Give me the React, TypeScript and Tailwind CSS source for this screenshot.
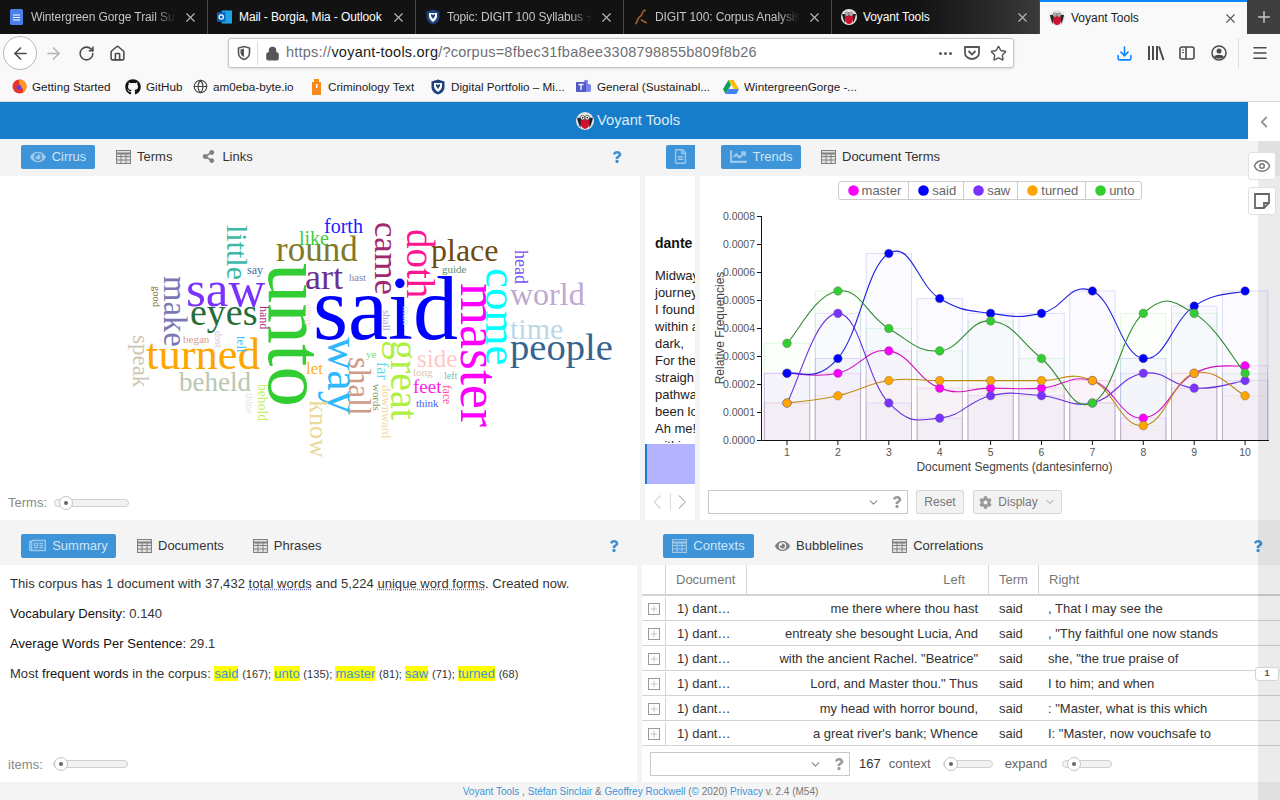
import type { ReactNode } from "react";
import { FaEye, FaShareAlt, FaQuestion, FaCog, FaChartLine, FaRegFileAlt, FaRegNewspaper, FaGithub } from "react-icons/fa";
import { ArrowLeft, ArrowRight, RotateCw, Home, Lock, Globe, Download, ChevronDown, ChevronLeft, ChevronRight, X, Plus, Menu, Star, Eye } from "lucide-react";

// [text, x, y, size, colour, rotated] - x/y is where the baseline starts
const WORDS: [string, number, number, number, string, boolean][] = [
  ["said", 313, 338, 90, "#0000ff", false],
  ["saw", 186, 305, 51, "#7a33ff", false],
  ["eyes", 190, 324, 38, "#256d37", false],
  ["turned", 146, 368, 44.6, "#ffa500", false],
  ["beheld", 179, 390, 27, "#b9c7b2", false],
  ["round", 276, 261, 35, "#7f7a2a", false],
  ["art", 305, 288, 36, "#6a2f90", false],
  ["like", 299, 244, 20, "#3ccf3c", false],
  ["forth", 324, 232, 20, "#1a1aff", false],
  ["say", 247, 273, 12, "#3b6aa0", false],
  ["hast", 349, 281, 10.5, "#8a80b0", false],
  ["began", 183, 342, 11, "#dc9c86", false],
  ["let", 306, 374, 17, "#ffb020", false],
  ["ye", 366, 357, 11, "#7de07d", false],
  ["place", 431, 260, 32, "#6e4a10", false],
  ["guide", 442, 272, 11, "#5a9070", false],
  ["world", 510, 304, 32, "#c0a8d0", false],
  ["time", 510, 338, 30, "#bcd8e8", false],
  ["people", 510, 359, 38.6, "#35658f", false],
  ["side", 417, 366, 25, "#ffc8c8", false],
  ["long", 413, 375, 11, "#d8c8b0", false],
  ["left", 444, 378, 10, "#70c0b0", false],
  ["feet", 413, 392, 19, "#ff20f0", false],
  ["think", 416, 406, 11, "#4060f0", false],
  ["unto", 269, 263, 81, "#32cd32", true],
  ["little", 227, 225, 30, "#3cb8a8", true],
  ["make", 164, 276, 32.7, "#7c78b4", true],
  ["speak", 132, 335, 23, "#d0c4b4", true],
  ["good", 152, 286, 10.5, "#8a6a30", true],
  ["hand", 260, 306, 12, "#b03080", true],
  ["away", 306, 304, 11, "#ffd8d8", true],
  ["dost", 215, 331, 10, "#d8c0d8", true],
  ["tell", 237, 336, 13, "#30c0ff", true],
  ["behold", 257, 384, 13.6, "#c0f060", true],
  ["thine", 245, 393, 10.5, "#d8e8d8", true],
  ["way", 327, 337, 46, "#30b8ff", true],
  ["shall", 349, 357, 31, "#d09a88", true],
  ["know", 309, 400, 26, "#ecd898", true],
  ["words", 373, 384, 11, "#8a9a60", true],
  ["far", 377, 362, 16, "#60d8e8", true],
  ["downward", 382, 385, 12.6, "#f0d8a0", true],
  ["man", 403, 306, 11, "#d0e8f0", true],
  ["shall", 383, 310, 11, "#b0a0e0", true],
  ["came", 375, 222, 34.6, "#a02a70", true],
  ["doth", 407, 229, 39, "#ff1493", true],
  ["great", 390, 340, 40, "#b0f040", true],
  ["master", 461, 283, 54, "#ff00ff", true],
  ["come", 486, 268, 45, "#00ffff", true],
  ["head", 515, 250, 18, "#7a50f0", true],
  ["face", 443, 385, 11.5, "#ff5098", true],
];

const SERIES = [
  { name: "master", dot: "#ff00ff", line: "#d010c0", data: [2.4, 2.4, 3.2, 1.87, 1.87, 1.87, 2.14, 0.8, 2.4, 2.67] },
  { name: "said", dot: "#0000ff", line: "#2020e0", data: [2.4, 2.93, 6.68, 5.07, 4.54, 4.54, 5.34, 2.93, 4.8, 5.34] },
  { name: "saw", dot: "#7a33ff", line: "#6a30e0", data: [1.34, 4.54, 1.34, 0.8, 1.6, 1.6, 1.34, 2.4, 1.87, 2.14] },
  { name: "turned", dot: "#ffa500", line: "#c08a10", data: [1.34, 1.6, 2.14, 2.14, 2.14, 2.14, 2.14, 0.53, 2.4, 1.6] },
  { name: "unto", dot: "#32cd32", line: "#2e8b2e", data: [3.47, 5.34, 4.0, 3.2, 4.27, 2.93, 1.34, 4.54, 4.54, 2.4] },
];

const ROWS = [
  ["me there where thou hast", ", That I may see the"],
  ["entreaty she besought Lucia, And", ', "Thy faithful one now stands'],
  ['with the ancient Rachel. "Beatrice"', 'she, "the true praise of'],
  ['Lord, and Master thou." Thus', "I to him; and when"],
  ["my head with horror bound,", ': "Master, what is this which'],
  ["a great river's bank; Whence", 'I: "Master, now vouchsafe to'],
];

const READER = ["Midway", "journey", "I found", "within a", "dark,", "For the", "straigh", "pathwa", "been lo", "Ah me!", "within"];

const px = (i: number) => 787 + i * 50.9;
const py = (v: number) => 440.5 - v * 28;

function curve(data: number[]) {
  const pts = data.map((v, i) => [px(i), py(v)]);
  let d = `M${pts[0][0]},${pts[0][1]}`;
  for (let i = 0; i < pts.length - 1; i++) {
    const p0 = pts[Math.max(i - 1, 0)];
    const p1 = pts[i];
    const p2 = pts[i + 1];
    const p3 = pts[Math.min(i + 2, pts.length - 1)];
    const k = 0.22;
    d += `C${p1[0] + (p2[0] - p0[0]) * k},${p1[1] + (p2[1] - p0[1]) * k} ${p2[0] - (p3[0] - p1[0]) * k},${p2[1] - (p3[1] - p1[1]) * k} ${p2[0]},${p2[1]}`;
  }
  return d;
}

function Owl({ size = 16 }: { size?: number }) {
  return (
    <svg width={size} height={size} viewBox="0 0 16 16" className="shrink-0">
      <circle cx="8" cy="8" r="8" fill="#e8e4e4" />
      <path d="M1 5c1 5 2 7 3 9L5 5ZM15 5c-1 5-2 7-3 9L11 5Z" fill="#222" />
      <ellipse cx="8" cy="9.5" rx="4" ry="5.5" fill="#d01030" />
      <circle cx="6" cy="5" r="2" fill="#fff" stroke="#333" strokeWidth=".6" />
      <circle cx="10" cy="5" r="2" fill="#fff" stroke="#333" strokeWidth=".6" />
      <circle cx="6" cy="5" r=".7" fill="#111" />
      <circle cx="10" cy="5" r=".7" fill="#111" />
    </svg>
  );
}

function Shield() {
  return (
    <svg width="16" height="16" viewBox="0 0 16 16" className="shrink-0">
      <path d="M8 .5 14.5 2.5V8c0 4-3 6.5-6.5 7.5C4.500 14.500 1.500 12 1.500 8V2.500Z" fill="#1e407c" />
      <path d="M4 4h8v3c0 2-1 4-4 6-3-2-4-4-4-6Z" fill="#fff" />
      <path d="M6 5l2 1 2-1v2l-2 3-2-3Z" fill="#1e407c" />
    </svg>
  );
}

// outlined table glyph used on the panel tabs
function Grid({ className = "text-[#808080]" }: { className?: string }) {
  return (
    <svg width="15" height="14" viewBox="0 0 15 14" className={className}>
      <rect x=".5" y=".5" width="14" height="13" fill="currentColor" fillOpacity=".14" stroke="currentColor" />
      <path d="M.5 3.500h14" stroke="currentColor" strokeWidth="2" />
      <path d="M.5 6.500h14M.5 10h14M5 3v10M10 3v10" stroke="currentColor" />
    </svg>
  );
}

function TabBar({ icon, title, bright, fade, className }: { icon: ReactNode; title: string; bright?: boolean; fade?: boolean; className: string }) {
  return (
    <div className={`flex h-[34px] w-[208px] items-center pl-[9px] pr-[9px] gap-[7px] border-r border-[#4a4a4a] ${className}`}>
      <div className="w-[15px] flex justify-center shrink-0">{icon}</div>
      <div className={`flex-1 overflow-hidden whitespace-nowrap text-[12px] tracking-[-0.1px] ${bright ? "text-white" : "text-[#c4c4c4]"} ${fade ? "[mask-image:linear-gradient(to_right,black_85%,transparent)]" : ""}`}>{title}</div>
      <X size={15} className="text-[#b8b8b8] shrink-0" strokeWidth={1.8} />
    </div>
  );
}

function Mark({ icon, label, className }: { icon: ReactNode; label: string; className: string }) {
  return (
    <div className={`flex items-center gap-[5px] whitespace-nowrap ${className}`}>
      {icon}
      <span>{label}</span>
    </div>
  );
}

function Browser() {
  return (
    <div className="bg-[#f9f9fa] h-[102px] border-b border-[#d8d8d8]">
      <div className="flex h-[34px] bg-[#121212]">
        <TabBar fade title="Wintergreen Gorge Trail Sustainability" className="" icon={
          <svg width="13" height="16" viewBox="0 0 13 16"><rect width="13" height="16" rx="1.5" fill="#4a7ee8" /><path d="M3 6h7M3 8.500h7M3 11h7" stroke="#fff" strokeWidth="1.200" /></svg>
        } />
        <TabBar bright title="Mail - Borgia, Mia - Outlook" className="" icon={
          <svg width="16" height="16" viewBox="0 0 16 16"><rect x="5" y="1" width="11" height="14" fill="#1fa3e8" /><rect y="3" width="9" height="10" rx="1" fill="#0a64b8" /><circle cx="4.500" cy="8" r="2.300" fill="none" stroke="#fff" strokeWidth="1.300" /></svg>
        } />
        <TabBar fade title="Topic: DIGIT 100 Syllabus + Course" className="" icon={<Shield />} />
        <TabBar fade title="DIGIT 100: Corpus Analysis / Voyant" className="" icon={
          <svg width="16" height="16" viewBox="0 0 16 16"><path d="M3 15c2-1 1-4 3-6s3-2 4-5c0-1 1-3 3-3M9 11c1 1 3 2 5 3" fill="none" stroke="#a0592c" strokeWidth="1.800" strokeLinecap="round" /></svg>
        } />
        <TabBar bright title="Voyant Tools" className="bg-gradient-to-r from-[#121212] from-40% to-[#3a3a3a]" icon={<Owl />} />
        <div className="flex h-[34px] w-[207px] items-center pl-[9px] pr-[9px] gap-[7px] bg-[#f9f9fa] border-t-2 border-[#0a84ff]">
          <div className="w-[15px] flex justify-center shrink-0"><Owl /></div>
          <div className="flex-1 text-[12px] text-[#222]">Voyant Tools</div>
          <X size={15} className="text-[#555]" strokeWidth={1.8} />
        </div>
        <div className="flex-1 flex items-center justify-center bg-[#3f3f3f]">
          <Plus size={18} className="text-[#c8c8c8]" strokeWidth={2} />
        </div>
      </div>
      <div className="flex h-[38px] items-center text-[#4a4a4f]">
        <div className="ml-[3px] flex h-[34px] w-[34px] items-center justify-center rounded-full border border-[#b8b8b8] bg-white">
          <ArrowLeft size={19} strokeWidth={2} />
        </div>
        <ArrowRight size={19} strokeWidth={2} className="ml-[7px] text-[#b4b4b4]" />
        <RotateCw size={17} strokeWidth={2.200} className="ml-[15px]" />
        <Home size={17} strokeWidth={2.200} className="ml-[14px]" />
        <div className="ml-[102px] flex h-[30px] w-[786px] items-center rounded-[3px] border border-[#c4c4c4] bg-white shadow-sm">
          <svg width="16" height="16" viewBox="0 0 16 16" className="ml-[7px]"><path d="M8 1.500 13.500 3v5c0 3-2.500 5.500-5.500 6.500C5 13.500 2.500 11 2.500 8V3Z" fill="none" stroke="#55555a" strokeWidth="1.600" /><path d="M8 3.500V12C6 11 4.500 9.500 4.500 8V4.500Z" fill="#55555a" /></svg>
          <div className="ml-[5px] h-[24px] w-px bg-[#dcdcdc]" />
          <Lock size={15} className="ml-[7px] text-[#55555a]" fill="#55555a" />
          <div className="ml-[6px] text-[14.5px] text-[#6f6f74] whitespace-nowrap flex-1 tracking-[0.23px]">
            https://<span className="text-[#1a1a1a]">voyant-tools.org</span>/?corpus=8fbec31fba8ee3308798855b809f8b26
          </div>
          <div className="flex gap-[2px] mr-[11px]">
            <div className="h-[3px] w-[3px] rounded-full bg-[#55555a]" />
            <div className="h-[3px] w-[3px] rounded-full bg-[#55555a]" />
            <div className="h-[3px] w-[3px] rounded-full bg-[#55555a]" />
          </div>
          <svg width="18" height="16" viewBox="0 0 18 16" className="mr-[9px]"><path d="M2 2h14v6c0 3.500-3.500 6-7 6S2 11.500 2 8Z" fill="none" stroke="#55555a" strokeWidth="1.800" /><path d="M5.500 6 9 9.500 12.500 6" fill="none" stroke="#55555a" strokeWidth="1.800" /></svg>
          <Star size={17} strokeWidth={2} className="mr-[6px] text-[#55555a]" />
        </div>
        <Download size={17} strokeWidth={2.200} className="ml-[102px] text-[#0a84ff]" />
        <svg width="18" height="16" viewBox="0 0 18 16" className="ml-[14px]"><path d="M2 1v14M6 1v14M10 1v14M12 1.500 16.500 15" stroke="#4a4a4f" strokeWidth="2" fill="none" /></svg>
        <svg width="16" height="16" viewBox="0 0 16 16" className="ml-[14px]"><rect x="1" y="2" width="14" height="12" rx="2" fill="none" stroke="#4a4a4f" strokeWidth="1.600" /><path d="M7 2v12" stroke="#4a4a4f" strokeWidth="1.600" /><path d="M3 5h2M3 7.500h2" stroke="#4a4a4f" /></svg>
        <svg width="16" height="16" viewBox="0 0 16 16" className="ml-[16px]"><circle cx="8" cy="8" r="7" fill="none" stroke="#4a4a4f" strokeWidth="1.500" /><circle cx="8" cy="6" r="2.500" fill="#4a4a4f" /><path d="M3 12c1-3 9-3 10 0-2 2-8 2-10 0Z" fill="#4a4a4f" /></svg>
        <div className="ml-[11px] h-[30px] w-px bg-[#dcdcdc]" />
        <Menu size={18} strokeWidth={2} className="ml-[12px]" />
      </div>
      <div className="flex h-[30px] items-center pl-[12px] text-[11.7px] text-[#1a1a1a]">
        <Mark label="Getting Started" className="w-[113px]" icon={
          <svg width="15" height="15" viewBox="0 0 15 15"><circle cx="7.500" cy="7.500" r="7" fill="#e8352c" /><path d="M7.500.5A7 7 0 0 1 14.500 7.500c0 3-2 5.500-4 6.500 1-2 1-3 0-5-1 .5-3 .5-4-.5 0-1 1-2 2-2-1-1-2-2-1-6Z" fill="#fd9a1f" /><circle cx="7" cy="8.500" r="2.500" fill="#6d3bd8" /></svg>
        } />
        <Mark label="GitHub" className="w-[68px] gap-[4px]" icon={<FaGithub size={16} className="text-[#111]" />} />
        <Mark label="am0eba-byte.io" className="w-[117px]" icon={<Globe size={15} strokeWidth={1.800} className="text-[#444]" />} />
        <Mark label="Criminology Text" className="w-[120px]" icon={
          <svg width="13" height="17" viewBox="0 0 13 17"><path d="M2 4h9v13H2Z" fill="#f58a1f" /><path d="M4 1h5v3H4Z" fill="#f58a1f" /><path d="M6 6h1.500v4H6Z" fill="#fff" /></svg>
        } />
        <Mark label="Digital Portfolio – Mi..." className="w-[145px] gap-[3px]" icon={<Shield />} />
        <Mark label="General (Sustainabl..." className="w-[148px]" icon={
          <svg width="17" height="16" viewBox="0 0 17 16"><circle cx="11" cy="3" r="2.200" fill="#7b83eb" /><rect x="8" y="5" width="8" height="8" rx="2" fill="#7b83eb" /><rect x="1" y="3" width="10" height="10" rx="1" fill="#5059c9" /><path d="M3.500 5.500h5M6 5.500V11" stroke="#fff" strokeWidth="1.300" /></svg>
        } />
        <Mark label="WintergreenGorge -..." className="gap-[3px]" icon={
          <svg width="16" height="14" viewBox="0 0 16 14"><path d="M5.500 0h5l5.500 9h-5Z" fill="#fbbc04" /><path d="M5.500 0 0 9l2.500 5 5.500-9Z" fill="#0f9d58" /><path d="M2.500 14h11l2.500-5H5.500Z" fill="#4285f4" /></svg>
        } />
      </div>
    </div>
  );
}

function Active({ children, className }: { children: ReactNode; className: string }) {
  return <div className={`flex h-[24px] items-center justify-center gap-[6px] rounded-[2px] bg-[#3d94d8] text-[13px] text-[#cfe4f6] ${className}`}>{children}</div>;
}

function Plain({ icon, label, className }: { icon: ReactNode; label: string; className: string }) {
  return (
    <div className={`flex items-center gap-[6px] text-[13px] text-[#333] whitespace-nowrap ${className}`}>
      <span className="flex w-[15px] justify-center text-[#808080]">{icon}</span>
      {label}
    </div>
  );
}

function Help({ className }: { className: string }) {
  return <FaQuestion size={12} className={`text-[#3d8fd0] ${className}`} />;
}

function Slider({ className, thumb }: { className: string; thumb: string }) {
  return (
    <div className={`relative h-[8px] rounded-full border border-[#d0d0d0] bg-[#f2f2f2] ${className}`}>
      <div className={`absolute top-[-4px] flex h-[14px] w-[14px] items-center justify-center rounded-full border border-[#c4c4c4] bg-white ${thumb}`}>
        <div className="h-[4px] w-[4px] rounded-full bg-[#666]" />
      </div>
    </div>
  );
}

function Combo({ className }: { className: string }) {
  return (
    <div className={`flex h-[24px] shrink-0 items-center border border-[#c8c8c8] bg-white ${className}`}>
      <ChevronDown size={13} className="text-[#888]" />
      <FaQuestion size={12} className="ml-[11px] text-[#999]" />
    </div>
  );
}

function Cirrus() {
  return (
    <div className="relative h-[344px] flex-1 overflow-hidden bg-white font-['Liberation_Serif',serif]">
      {WORDS.map(([t, x, y, s, c, r], i) => (
        <span
          key={i}
          className="absolute whitespace-nowrap leading-[0] origin-top-left"
          style={{
            left: r ? x + 0.3375 * s : x,
            top: (r ? y : y + 1 - 0.3375 * s) - 176,
            fontSize: s,
            color: c,
            transform: r ? "rotate(90deg)" : undefined,
          }}
        >
          {t}
        </span>
      ))}
    </div>
  );
}

function Chart() {
  return (
    <svg viewBox="700 201 580 284" className="h-[284px] w-[580px] font-['Liberation_Sans',sans-serif]">
      {SERIES.map((s) =>
        s.data.map((v, i) => (
          <rect key={s.name + i} x={px(i) - 22.700} y={py(v)} width={45.400} height={440.500 - py(v)} fill={s.dot} fillOpacity={0.018} stroke={s.dot} strokeOpacity={0.13} />
        ))
      )}
      {[0, 1, 2, 3, 4, 5, 6, 7, 8].map((v) => (
        <g key={v}>
          <path d={`M757 ${py(v)}H761`} stroke="#111" />
          <text x="755" y={py(v) + 3.500} textAnchor="end" fontSize="10.500" fill="#555">{`0.000${v}`}</text>
        </g>
      ))}
      <path d="M761.500 216V440.500H1269" fill="none" stroke="#111" />
      {SERIES[0].data.map((_, i) => (
        <g key={i}>
          <path d={`M${px(i)} 441V445`} stroke="#111" />
          <text x={px(i)} y="456" textAnchor="middle" fontSize="10.500" fill="#555">{i + 1}</text>
        </g>
      ))}
      <text x="1014.500" y="471" textAnchor="middle" fontSize="12" fill="#444">Document Segments (dantesinferno)</text>
      <text transform="translate(724 328) rotate(-90)" textAnchor="middle" fontSize="12" fill="#444">Relative Frequencies</text>
      {SERIES.map((s) => (
        <path key={s.name} d={curve(s.data)} fill="none" stroke={s.line} strokeWidth="1.100" />
      ))}
      {SERIES.map((s) =>
        s.data.map((v, i) => <circle key={s.name + i} cx={px(i)} cy={py(v)} r="4.300" fill={s.dot} stroke="#666" strokeWidth=".4" />)
      )}
    </svg>
  );
}

function LegendDot({ colour }: { colour: string }) {
  return <svg width="11" height="11" viewBox="0 0 11 11"><circle cx="5.500" cy="5.500" r="5.300" fill={colour} /></svg>;
}

export default function App() {
  return (
    <div className="relative h-[800px] w-[1280px] overflow-hidden bg-[#f4f4f4] font-['Liberation_Sans',sans-serif]">
      <Browser />
      <div className="flex h-[37px] items-center justify-center gap-[3px] bg-[#177cc9] pr-[24px] text-[14.7px] text-[#dcecf8]">
        <Owl size={18} />
        Voyant Tools
      </div>

      <div className="flex h-[381px]">
        {/* Cirrus */}
        <div className="flex w-[640px] shrink-0 flex-col">
          <div className="flex h-[37px] items-center pb-[2px] pl-[21px]">
            <Active className="w-[74px]"><FaEye size={16} className="text-[#9cc8ea]" />Cirrus</Active>
            <Plain className="ml-[21px]" icon={<Grid />} label="Terms" />
            <Plain className="ml-[29px]" icon={<FaShareAlt size={13} />} label="Links" />
            <Help className="ml-[358px]" />
          </div>
          <Cirrus />
          <div className="relative bottom-[17px] flex h-[0px] items-center gap-[7px] pl-[8px] text-[13px] text-[#888]">
            Terms:
            <Slider className="w-[75px]" thumb="left-[4px]" />
          </div>
        </div>

        {/* Reader */}
        <div className="ml-[5px] flex w-[50px] shrink-0 flex-col">
          <div className="flex h-[37px] items-center pb-[2px] pl-[21px]">
            <div className="flex h-[24px] w-[29px] items-center justify-center rounded-l-[2px] bg-[#3d94d8] text-[#9cc8ea]"><FaRegFileAlt size={15} /></div>
          </div>
          <div className="h-[268px] bg-white">
            <div className="h-[267px] overflow-hidden pl-[10px] text-[13px] leading-[17px] text-[#222] whitespace-nowrap">
              <div className="mb-[15px] mt-[59px] text-[14px] font-bold text-[#111]">dante</div>
              {READER.map((l) => <div key={l}>{l}</div>)}
            </div>
          </div>
          <div className="h-[40px] border-l-2 border-[#177cc9] bg-[#b3b3ff]" />
          <div className="flex h-[36px] items-center justify-center bg-white text-[#aaa]">
            <ChevronLeft size={28} strokeWidth={1} className="text-[#ccc]" />
            <div className="h-[18px] w-px bg-[#ddd]" />
            <ChevronRight size={28} strokeWidth={1} />
          </div>
        </div>

        {/* Trends */}
        <div className="ml-[5px] flex w-[580px] shrink-0 flex-col">
          <div className="flex h-[37px] items-center pb-[2px] pl-[21px]">
            <Active className="w-[80px]"><FaChartLine size={17} className="text-[#9cc8ea]" />Trends</Active>
            <Plain className="ml-[20px]" icon={<Grid />} label="Document Terms" />
          </div>
          <div className="flex-1 bg-white">
            <div className="flex justify-center pb-[1px] pt-[5px]">
              <div className="flex h-[19px] divide-x divide-[#ccc] rounded-[3px] border border-[#ccc] text-[13px] text-[#666]">
                {SERIES.map((s) => (
                  <div key={s.name} className="flex items-center gap-[3px] pl-[9px] pr-[7px] leading-none">
                    <LegendDot colour={s.dot} />
                    {s.name}
                  </div>
                ))}
              </div>
            </div>
            <Chart />
            <div className="mt-[5px] flex items-center pl-[8px]">
              <Combo className="w-[200px] pl-[158px]" />
              <div className="ml-[8px] flex h-[24px] w-[48px] items-center justify-center rounded-[2px] border border-[#d8d8d8] bg-[#f2f2f2] text-[12px] text-[#777]">Reset</div>
              <div className="ml-[9px] flex h-[24px] w-[89px] items-center justify-center gap-[6px] rounded-[2px] border border-[#d8d8d8] bg-[#f2f2f2] text-[12px] text-[#777]">
                <FaCog size={13} className="text-[#999]" />Display<ChevronDown size={12} className="text-[#999]" />
              </div>
            </div>
          </div>
        </div>
      </div>

      <div className="flex h-[262px]">
        {/* Summary */}
        <div className="flex w-[637px] shrink-0 flex-col">
          <div className="flex h-[45px] shrink-0 items-center pl-[21px] pt-[6px]">
            <Active className="w-[95px]"><FaRegNewspaper size={17} className="text-[#9cc8ea]" />Summary</Active>
            <Plain className="ml-[21px]" icon={<Grid />} label="Documents" />
            <Plain className="ml-[29px]" icon={<Grid />} label="Phrases" />
            <Help className="ml-[287px]" />
          </div>
          <div className="flex flex-1 flex-col bg-white pl-[10px] text-[13px] tracking-[0.04px] text-[#333]">
            <p className="mt-[10px] leading-[18px]">
              This corpus has 1 document with 37,432 <span className="underline decoration-dotted decoration-[#7a7ad0]">total words</span> and 5,224 <span className="underline decoration-dotted decoration-[#7a7ad0]">unique word forms</span>. Created now.
            </p>
            <p className="mt-[12px] leading-[18px]"><span className="text-[#111]">Vocabulary Density:</span> 0.140</p>
            <p className="mt-[12px] leading-[18px]"><span className="text-[#111]">Average Words Per Sentence:</span> 29.1</p>
            <p className="mt-[12px] leading-[18px]">
              Most <span className="text-[#111]">frequent words</span> in the corpus:{" "}
              {[["said", "167"], ["unto", "135"], ["master", "81"], ["saw", "71"], ["turned", "68"]].map(([w, n], i) => (
                <span key={w}>
                  <span className="bg-[#ffff00] text-[#3d94d8]">{w}</span> <span className="text-[11px]">({n}){i < 4 ? "; " : ""}</span>
                </span>
              ))}
            </p>
            <div className="mb-[8px] mt-auto flex items-center gap-[10px] text-[#888]">
              <span className="-ml-[2px]">items:</span>
              <Slider className="w-[75px]" thumb="left-[0px]" />
            </div>
          </div>
        </div>

        {/* Contexts */}
        <div className="ml-[5px] flex min-w-0 flex-1 flex-col">
          <div className="flex h-[45px] shrink-0 items-center pl-[21px] pt-[6px]">
            <Active className="w-[91px]"><Grid className="text-[#9cc8ea]" />Contexts</Active>
            <Plain className="ml-[21px]" icon={<FaEye size={16} />} label="Bubblelines" />
            <Plain className="ml-[29px]" icon={<Grid />} label="Correlations" />
            <Help className="ml-[269px]" />
          </div>
          <div className="flex flex-1 flex-col bg-white text-[13px]">
            <div className="grid h-[31px] grid-cols-[24px_81px_242px_50px_1fr] items-center border-b-2 border-[#d4d4d4] text-[#777]">
              <div className="h-full border-r border-[#d4d4d4]" />
              <div className="flex h-full items-center border-r border-[#d4d4d4] pl-[10px]">Document</div>
              <div className="flex h-full items-center justify-end border-r border-[#d4d4d4] pr-[23px]">Left</div>
              <div className="flex h-full items-center border-r border-[#d4d4d4] pl-[10px]">Term</div>
              <div className="pl-[10px]">Right</div>
            </div>
            {ROWS.map(([l, r]) => (
              <div key={l} className="grid h-[25px] grid-cols-[24px_81px_242px_50px_1fr] items-center border-b border-[#d4d4d4] pt-[1px] text-[#333]">
                <div className="flex h-full items-center justify-center border-r border-[#d4d4d4]">
                  <div className="flex h-[12px] w-[12px] items-center justify-center border border-[#999]"><Plus size={10} strokeWidth={1} className="text-[#777]" /></div>
                </div>
                <div className="pl-[11px]">1) dant…</div>
                <div className="whitespace-nowrap pr-[11px] text-right">{l}</div>
                <div className="pl-[10px]">said</div>
                <div className="whitespace-nowrap pl-[9px]">{r}</div>
              </div>
            ))}
            <div className="flex flex-1 items-center pl-[8px] text-[#666]">
              <Combo className="w-[200px] pl-[158px]" />
              <span className="ml-[9px] text-[#333]">167</span>
              <span className="ml-[8px]">context</span>
              <Slider className="ml-[12px] w-[50px]" thumb="left-[0px]" />
              <span className="ml-[12px]">expand</span>
              <Slider className="ml-[15px] w-[50px]" thumb="left-[4px]" />
            </div>
          </div>
        </div>
      </div>

      <div className="flex h-[18px] items-center justify-center pl-[1px] text-[10px] text-[#777]">
        <span className="text-[#3d94d8]">Voyant Tools</span>&nbsp;, <span className="ml-[3px] text-[#3d94d8]">Stéfan Sinclair</span>&nbsp;&amp;&nbsp;<span className="text-[#3d94d8]">Geoffrey Rockwell</span>&nbsp;(<span className="text-[#3d94d8]">©</span>&nbsp;2020)&nbsp;<span className="text-[#3d94d8]">Privacy</span>&nbsp;v. 2.4 (M54)
      </div>

      {/* right hand overlay strip and its buttons */}
      <div className="absolute bottom-0 right-0 top-[139px] w-[22px] bg-black/[0.08]" />
      <div className="absolute right-0 top-[102px] flex h-[39px] w-[32px] items-center justify-center rounded-bl-[3px] bg-white">
        <ChevronLeft size={18} strokeWidth={2.500} className="text-[#999]" />
      </div>
      <div className="absolute right-[4px] top-[152px] flex h-[28px] w-[28px] items-center justify-center rounded-[3px] border border-[#e0e0e0] bg-white">
        <Eye size={18} strokeWidth={2} className="text-[#777]" />
      </div>
      <div className="absolute right-[4px] top-[187px] flex h-[28px] w-[28px] items-center justify-center rounded-[3px] border border-[#e0e0e0] bg-white">
        <svg width="16" height="16" viewBox="0 0 16 16"><path d="M1 1h14v9l-5 5H1Z M10 15v-5h5" fill="none" stroke="#666" strokeWidth="1.800" /></svg>
      </div>
      <div className="absolute right-[1px] top-[667px] flex h-[14px] w-[24px] items-center justify-center rounded-[3px] border border-[#d4d4d4] bg-white text-[9px] font-bold text-[#555]">1</div>
    </div>
  );
}
